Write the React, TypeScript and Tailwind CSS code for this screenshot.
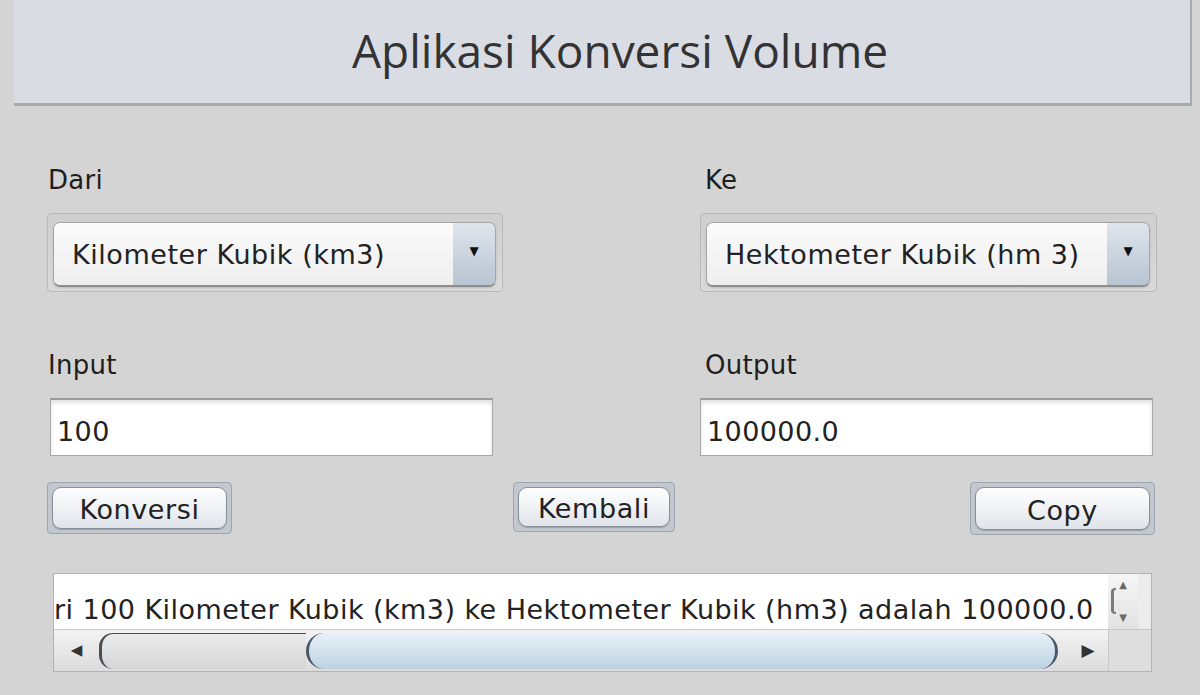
export default function App() {
  return (
    <div className="w-[1200px] h-[695px] overflow-hidden bg-[#d4d4d4] font-['DejaVu_Sans',sans-serif] text-[#1e1e1e]">
      {/* Header */}
      <header className="ml-[14px] mr-[8px] h-[106px] bg-[#d9dce3] border-b-[3px] border-r-2 border-[#a7aaaf] flex items-center justify-center pl-[36px]">
        <h1 className="font-['Open_Sans',sans-serif] text-[46px] text-[#333] leading-none pb-[4px]">
          Aplikasi Konversi Volume
        </h1>
      </header>

      <div className="pl-[47px]">
        {/* Labels */}
        <div className="flex mt-[59px] h-[30px] items-center text-[26px] tracking-[0.3px]">
          <span className="w-[653px] pl-[1px]">Dari</span>
          <span className="pl-[5px]">Ke</span>
        </div>

        {/* Combo boxes */}
        <div className="flex mt-[18px]">
          <Combo value="Kilometer Kubik (km3)" w="w-[456px]" />
          <div className="w-[197px]" />
          <Combo value="Hektometer Kubik (hm 3)" w="w-[457px]" />
        </div>

        {/* Labels */}
        <div className="flex mt-[58px] h-[30px] items-center text-[26px] tracking-[0.3px]">
          <span className="w-[653px] pl-[1px]">Input</span>
          <span className="pl-[5px]">Output</span>
        </div>

        {/* Fields */}
        <div className="flex mt-[18px]">
          <div className="w-[653px] pl-[3px]">
            <Field value="100" w="w-[443px]" />
          </div>
          <Field value="100000.0" w="w-[453px]" />
        </div>

        {/* Buttons */}
        <div className="flex mt-[26px] items-start">
          <Btn label="Konversi" w="w-[185px]" h="h-[52px]" />
          <div className="ml-[281px]">
            <Btn label="Kembali" w="w-[162px]" h="h-[50px]" />
          </div>
          <div className="ml-[295px]">
            <Btn label="Copy" w="w-[185px]" h="h-[53px]" />
          </div>
        </div>

        {/* Result scroll pane */}
        <div className="mt-[38px] ml-[6px] w-[1099px] h-[99px] border border-[#b3b3b3] bg-[#e4e4e4] flex flex-col">
          <div className="flex h-[55px]">
            <div className="flex-1 bg-white overflow-hidden flex items-center pt-[18px]">
              <span className="whitespace-nowrap text-[27px] text-[#222] tracking-[0.45px]">
                ri 100 Kilometer Kubik (km3) ke Hektometer Kubik (hm3) adalah 100000.0
              </span>
            </div>
            <div className="w-[43px] bg-[#ececec] flex">
              <div className="w-[30px] bg-gradient-to-b from-[#f6f6f6] to-[#e2e2e2] relative flex flex-col items-center justify-between py-[6px] text-[10px] text-[#6a6a6a] leading-none">
                <span>▲</span>
                <div className="absolute left-[3px] top-[14px] w-[5px] h-[26px] border-l-[3px] border-y-2 border-[#7c7c7c] rounded-l-sm" />
                <span>▼</span>
              </div>
            </div>
          </div>
          <div className="flex flex-1">
            <div className="flex-1 flex items-center bg-gradient-to-b from-[#f3f3f3] to-[#dcdcdc] border-t border-[#c8c8c8]">
              <div className="w-[45px] flex justify-center text-[15px] text-[#333]">◀</div>
              <div className="flex-1 h-[36px] flex items-stretch">
                <div className="w-[207px] rounded-l-[14px] border-l-[3px] border-t border-[#4a4f55] bg-gradient-to-b from-[#ebebeb] to-[#d6d6d6]" />
                <div className="w-[752px] rounded-full border-x-[3px] border-[#46586a] bg-gradient-to-b from-[#e6f0f7] via-[#d2e2ed] to-[#bcd2e2]" />
              </div>
              <div className="w-[40px] flex justify-center text-[17px] text-[#333]">▶</div>
            </div>
            <div className="w-[43px] bg-[#dedede] border-t border-l border-[#c8c8c8]" />
          </div>
        </div>
      </div>
    </div>
  );
}

function Combo({ value, w }: { value: string; w: string }) {
  return (
    <div className={`${w} h-[79px] border border-[#b9b9b9] bg-gradient-to-b from-[#cfcfcf] to-[#dadada] rounded-sm pl-[5px] pr-[6px] pt-[8px] pb-[4px]`}>
      <div className="h-full flex rounded-[7px] border border-[#a5a5a5] border-b-2 border-b-[#8e8e8e] overflow-hidden shadow-sm">
        <div className="flex-1 bg-gradient-to-b from-[#fbfbfb] to-[#eeeeee] flex items-center pl-[18px] pt-[3px] text-[27px] text-[#222] tracking-[0.55px]">
          {value}
        </div>
        <div className="w-[42px] bg-gradient-to-b from-[#dfe5ec] to-[#b7c4d1] flex items-center justify-center text-[12px] text-[#111] pb-[6px]">
          ▼
        </div>
      </div>
    </div>
  );
}

function Field({ value, w }: { value: string; w: string }) {
  return (
    <div className={`${w} h-[58px] bg-white border border-[#a9a9a9] border-t-2 border-t-[#9b9b9b] shadow-[inset_0_3px_4px_rgba(0,0,0,0.12)] flex items-center pl-[6px] pt-[9px] text-[27px] text-[#222] tracking-[0.4px]`}>
      {value}
    </div>
  );
}

function Btn({ label, w, h }: { label: string; w: string; h: string }) {
  return (
    <div className={`${w} ${h} border border-[#9ca4ad] bg-[#c3c8ce] rounded-sm p-[4px]`}>
      <div className="h-full rounded-[9px] border border-[#878f98] bg-gradient-to-b from-[#fdfdfd] via-[#f0f2f5] to-[#dfe3e9] flex items-center justify-center pt-[5px] text-[27px] text-[#222] tracking-[0.6px] shadow-[0_1px_1px_rgba(0,0,0,0.2)]">
        {label}
      </div>
    </div>
  );
}
